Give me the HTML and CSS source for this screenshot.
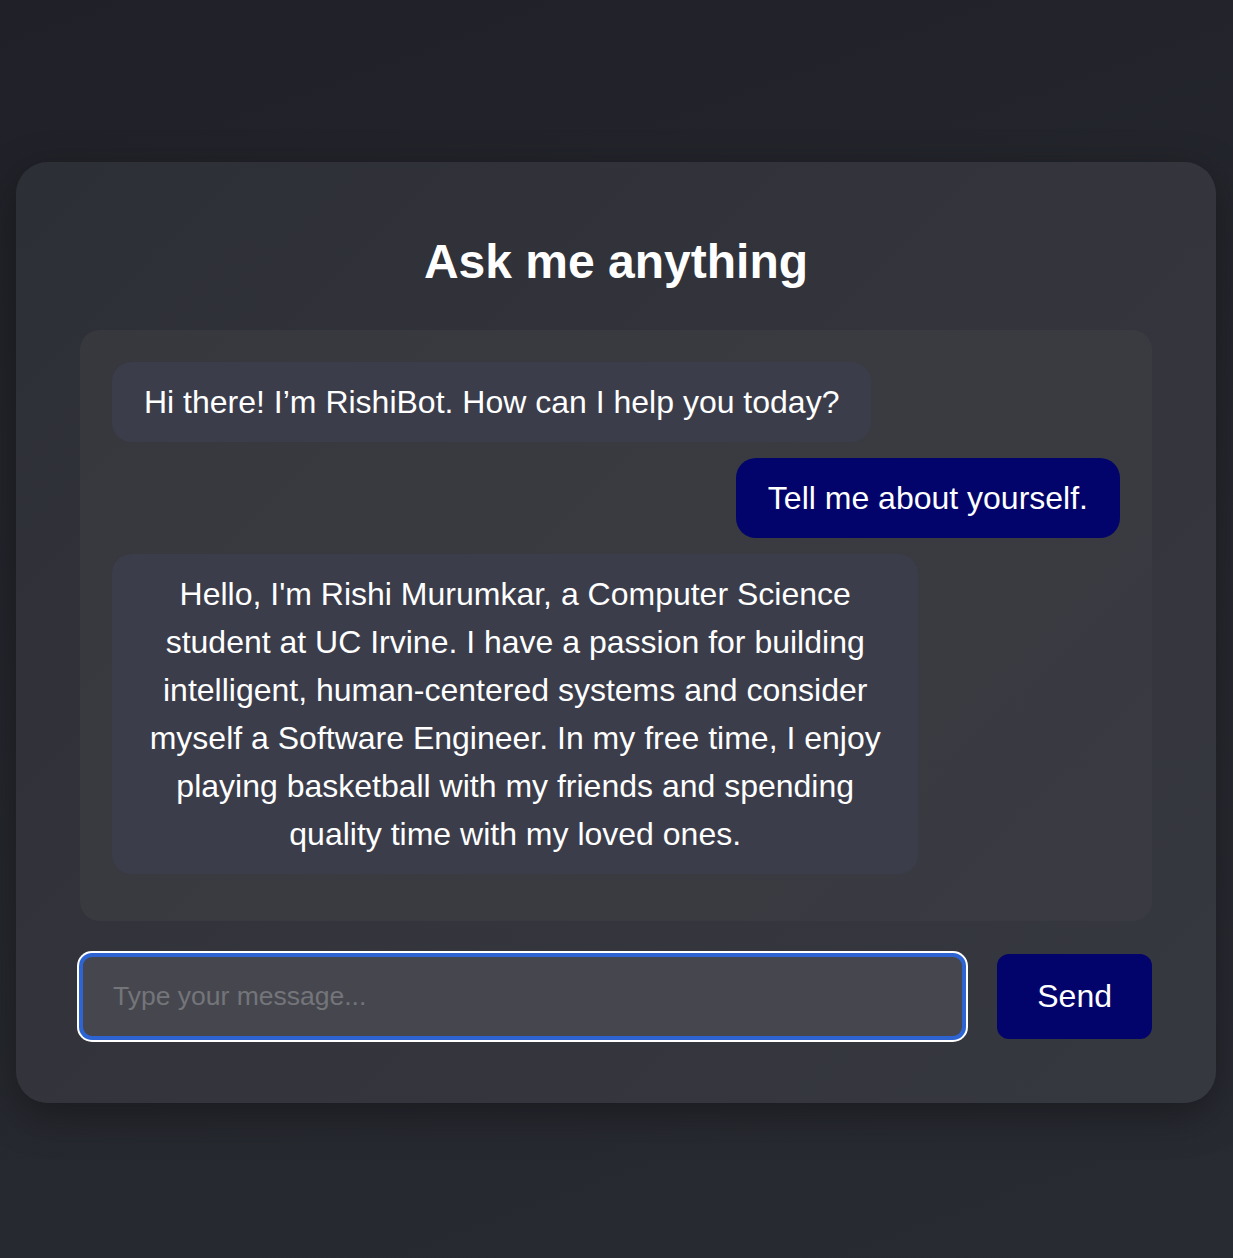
FILE: index.html
```html
<!DOCTYPE html>
<html lang="en">
<head>
<meta charset="utf-8">
<title>Ask me anything</title>
<link rel="stylesheet" href="styles.css">
</head>
<body>
  <main class="card">
    <h1 class="title">Ask me anything</h1>
    <section class="chat">
      <div class="bubble bot">Hi there! I’m RishiBot. How can I help you today?</div>
      <div class="bubble user">Tell me about yourself.</div>
      <div class="bubble bot">Hello, I'm Rishi Murumkar, a Computer Science student at UC Irvine. I have a passion for building intelligent, human-centered systems and consider myself a Software Engineer. In my free time, I enjoy playing basketball with my friends and spending quality time with my loved ones.</div>
    </section>
    <form class="composer">
      <input class="message-input" type="text" placeholder="Type your message...">
      <button class="send-button" type="button">Send</button>
    </form>
  </main>
</body>
</html>
```

FILE: styles.css
```css
* { box-sizing: border-box; }

html, body { height: 100%; }

body {
  margin: 0;
  padding-top: 7px;
  min-height: 100vh;
  display: flex;
  align-items: center;
  justify-content: center;
  background: linear-gradient(160deg, #202128 0%, #25272e 50%, #292b33 100%);
  font-family: "Liberation Sans", Arial, Helvetica, sans-serif;
  color: #ffffff;
}

.card {
  width: 1200px;
  margin-right: 1px;
  padding: 64px 64px 64px;
  border-radius: 32px;
  background: linear-gradient(135deg, #2d2f37 0%, #33343c 50%, #363840 100%);
  box-shadow: 0 12px 40px rgba(0, 0, 0, 0.35);
}

.title {
  margin: 2px 0 34px;
  font-size: 48px;
  font-weight: 700;
  line-height: 1.4;
  text-align: center;
  color: #ffffff;
}

.chat {
  display: flex;
  flex-direction: column;
  gap: 16px;
  padding: 32px 32px 47px;
  border-radius: 20px;
  background: linear-gradient(135deg, #37383e 0%, #3a3b40 50%, #393a42 100%);
}

.bubble {
  max-width: 80%;
  padding: 16px 32px;
  border-radius: 20px;
  font-size: 32px;
  line-height: 48px;
  text-align: center;
  color: #ffffff;
}

.bubble.bot {
  align-self: flex-start;
  background: #3c3d4b;
}

.bubble.user {
  align-self: flex-end;
  background: #02046b;
}

.composer {
  display: flex;
  gap: 32px;
  margin: 33px 0 0;
}

.message-input {
  flex: 1;
  min-width: 0;
  padding: 0 30px;
  border: 3px solid #2d64d2;
  border-radius: 12px;
  outline: none;
  box-shadow: 0 0 0 1px #2d64d2, 0 0 0 3px #ffffff;
  background: #46474e;
  font-family: inherit;
  font-size: 26.5px;
  color: #ffffff;
}

.message-input::placeholder {
  color: #74757a;
}

.send-button {
  padding: 24px 40px;
  border: none;
  border-radius: 12px;
  background: #02046b;
  font-family: inherit;
  font-size: 32px;
  line-height: 37px;
  color: #ffffff;
}
```
